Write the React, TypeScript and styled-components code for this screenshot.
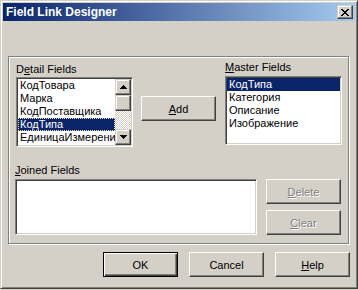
import React from 'react';
import styled, { createGlobalStyle, css } from 'styled-components';

const GlobalStyle = createGlobalStyle`
  html, body {
    margin: 0;
    padding: 0;
    background: #d4d0c8;
  }
  body {
    font-family: 'Liberation Sans', Arial, sans-serif;
    font-size: 11px;
    color: #000;
  }
`;

const raised = css`
  border: 1px solid;
  border-color: #fff #404040 #404040 #fff;
  box-shadow: inset -1px -1px #808080, inset 1px 1px #d4d0c8;
`;

const raisedSmall = css`
  border: 1px solid;
  border-color: #d4d0c8 #404040 #404040 #d4d0c8;
  box-shadow: inset -1px -1px #808080, inset 1px 1px #fff;
`;

const sunken = css`
  border: 1px solid;
  border-color: #808080 #fff #fff #808080;
  box-shadow: inset 1px 1px #404040, inset -1px -1px #d4d0c8;
`;

const Window = styled.div`
  box-sizing: border-box;
  width: 358px;
  height: 289px;
  padding: 2px;
  background: #d4d0c8;
  border: 1px solid;
  border-color: #d4d0c8 #404040 #404040 #d4d0c8;
  box-shadow: inset 1px 1px #fff, inset -1px -1px #808080;
  display: flex;
  flex-direction: column;
`;

const TitleBar = styled.div`
  height: 18px;
  padding: 0 2px;
  display: flex;
  align-items: center;
  justify-content: space-between;
  background: linear-gradient(to right, #0a246a, #a6caf0);
`;

const TitleText = styled.span`
  color: #fff;
  font-weight: bold;
  font-size: 12px;
  line-height: 18px;
  padding-left: 1px;
`;

const CloseButton = styled.div`
  box-sizing: border-box;
  width: 16px;
  height: 14px;
  background: #d4d0c8;
  ${raisedSmall};
  display: flex;
  align-items: center;
  justify-content: center;
`;

const GroupBox = styled.div`
  box-sizing: border-box;
  width: 341px;
  height: 188px;
  margin: 35px 0 0 5px;
  border: 1px solid #808080;
  box-shadow: 1px 1px 0 #fff, inset 1px 1px 0 #fff;
  display: flex;
  flex-direction: column;
`;

const Row = styled.div<{ $top?: number }>`
  display: flex;
  align-items: flex-start;
  margin-top: ${p => p.$top ?? 0}px;
`;

const Column = styled.div<{ $left: number; $top: number }>`
  display: flex;
  flex-direction: column;
  margin-left: ${p => p.$left}px;
  margin-top: ${p => p.$top}px;
`;

const Label = styled.div<{ $gap: number }>`
  line-height: 13px;
  height: 13px;
  margin-bottom: ${p => p.$gap}px;
  white-space: nowrap;
`;

const ListBox = styled.div<{ $w: number; $h: number }>`
  box-sizing: border-box;
  width: ${p => p.$w}px;
  height: ${p => p.$h}px;
  padding: 1px;
  background: #fff;
  ${sunken};
  display: flex;
  overflow: hidden;
`;

const Items = styled.div`
  flex: 1;
  min-width: 0;
  overflow: hidden;
`;

const Item = styled.div<{ $selected?: boolean; $focused?: boolean }>`
  box-sizing: border-box;
  height: 13px;
  line-height: 13px;
  padding-left: 2px;
  white-space: nowrap;
  overflow: hidden;
  ${p =>
    p.$selected &&
    css`
      background: #0a246a;
      color: #fff;
    `}
  ${p =>
    p.$focused &&
    css`
      outline: 1px dotted #f5db95;
      outline-offset: -1px;
    `}
`;

const ScrollBar = styled.div`
  width: 16px;
  display: flex;
  flex-direction: column;
`;

const ScrollButton = styled.div`
  box-sizing: border-box;
  width: 16px;
  height: 16px;
  background: #d4d0c8;
  ${raisedSmall};
  display: flex;
  align-items: center;
  justify-content: center;
`;

const Thumb = styled.div`
  box-sizing: border-box;
  width: 16px;
  height: 16px;
  background: #d4d0c8;
  ${raisedSmall};
`;

const Track = styled.div`
  flex: 1;
  background: repeating-conic-gradient(#d4d0c8 0 25%, #fff 0 50%) 0 0 / 2px 2px;
`;

const Button = styled.button<{ $default?: boolean }>`
  box-sizing: border-box;
  width: 75px;
  height: 25px;
  margin: 0;
  padding: 0;
  font-family: inherit;
  font-size: 11px;
  color: #000;
  background: #d4d0c8;
  ${raised};
  ${p =>
    p.$default &&
    css`
      border: 1px solid #000;
      box-shadow: inset 1px 1px #fff, inset -1px -1px #404040, inset -2px -2px #808080;
    `}
  &:disabled {
    color: #808080;
    text-shadow: 1px 1px 0 #fff;
  }
`;

const ButtonStack = styled.div`
  display: flex;
  flex-direction: column;
  gap: 6px;
  margin-left: 9px;
  margin-top: 15px;
`;

const ButtonRow = styled.div`
  display: flex;
  justify-content: flex-end;
  gap: 11px;
  margin-top: 8px;
  padding-right: 5px;
`;

const Arrow: React.FC<{ down?: boolean }> = ({ down }) => (
  <svg width="7" height="4" viewBox="0 0 7 4" shapeRendering="crispEdges">
    <g fill="#000" transform={down ? 'matrix(1 0 0 -1 0 4)' : undefined}>
      <rect x="3" y="0" width="1" height="1" />
      <rect x="2" y="1" width="3" height="1" />
      <rect x="1" y="2" width="5" height="1" />
      <rect x="0" y="3" width="7" height="1" />
    </g>
  </svg>
);

const CloseGlyph = () => (
  <svg width="8" height="7" viewBox="0 0 8 7" shapeRendering="crispEdges">
    <g fill="#000">
      <rect x="0" y="0" width="2" height="1" />
      <rect x="6" y="0" width="2" height="1" />
      <rect x="1" y="1" width="2" height="1" />
      <rect x="5" y="1" width="2" height="1" />
      <rect x="2" y="2" width="4" height="1" />
      <rect x="3" y="3" width="2" height="1" />
      <rect x="2" y="4" width="4" height="1" />
      <rect x="1" y="5" width="2" height="1" />
      <rect x="5" y="5" width="2" height="1" />
      <rect x="0" y="6" width="2" height="1" />
      <rect x="6" y="6" width="2" height="1" />
    </g>
  </svg>
);

const detailFields = ['КодТовара', 'Марка', 'КодПоставщика', 'КодТипа', 'ЕдиницаИзмерения'];
const masterFields = ['КодТипа', 'Категория', 'Описание', 'Изображение'];

export default function App() {
  return (
    <>
      <GlobalStyle />
      <Window>
        <TitleBar>
          <TitleText>Field Link Designer</TitleText>
          <CloseButton>
            <CloseGlyph />
          </CloseButton>
        </TitleBar>

        <GroupBox>
          <Row>
            <Column $left={7} $top={6}>
              <Label $gap={1}>
                D<u>e</u>tail Fields
              </Label>
              <ListBox $w={117} $h={70}>
                <Items>
                  {detailFields.map(f => (
                    <Item key={f} $selected={f === 'КодТипа'} $focused={f === 'КодТипа'}>
                      {f}
                    </Item>
                  ))}
                </Items>
                <ScrollBar>
                  <ScrollButton>
                    <Arrow />
                  </ScrollButton>
                  <Thumb />
                  <Track />
                  <ScrollButton>
                    <Arrow down />
                  </ScrollButton>
                </ScrollBar>
              </ListBox>
            </Column>

            <Column $left={8} $top={39}>
              <Button>
                <u>A</u>dd
              </Button>
            </Column>

            <Column $left={9} $top={4}>
              <Label $gap={2}>
                <u>M</u>aster Fields
              </Label>
              <ListBox $w={117} $h={69}>
                <Items>
                  {masterFields.map(f => (
                    <Item key={f} $selected={f === 'КодТипа'}>
                      {f}
                    </Item>
                  ))}
                </Items>
              </ListBox>
            </Column>
          </Row>

          <Row $top={17}>
            <Column $left={6} $top={0}>
              <Label $gap={2}>
                <u>J</u>oined Fields
              </Label>
              <ListBox $w={242} $h={56} />
            </Column>
            <ButtonStack>
              <Button disabled>
                <u>D</u>elete
              </Button>
              <Button disabled>
                <u>C</u>lear
              </Button>
            </ButtonStack>
          </Row>
        </GroupBox>

        <ButtonRow>
          <Button $default>OK</Button>
          <Button>Cancel</Button>
          <Button>
            <u>H</u>elp
          </Button>
        </ButtonRow>
      </Window>
    </>
  );
}
